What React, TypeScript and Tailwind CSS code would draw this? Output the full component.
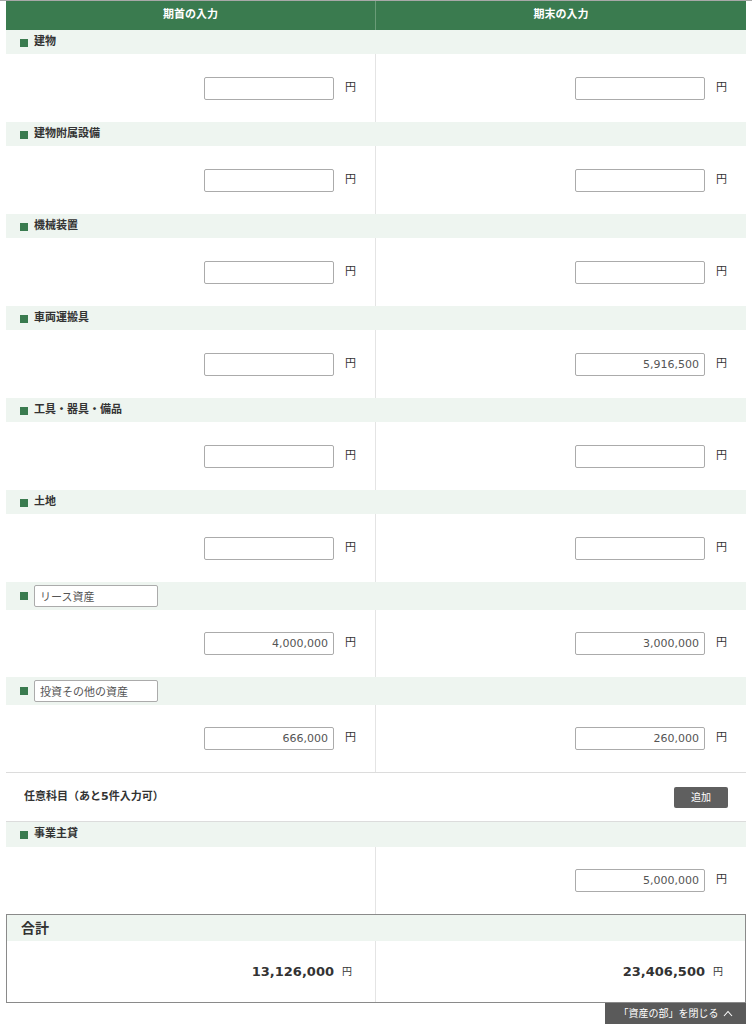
import React from "react";

const FONT = { fontFamily: '"DejaVu Sans", "Noto Sans CJK JP", sans-serif' };

type Item = { name: string; a: string; b: string; editable?: boolean };

const items: Item[] = [
  { name: "建物", a: "", b: "" },
  { name: "建物附属設備", a: "", b: "" },
  { name: "機械装置", a: "", b: "" },
  { name: "車両運搬具", a: "", b: "5,916,500" },
  { name: "工具・器具・備品", a: "", b: "" },
  { name: "土地", a: "", b: "" },
  { name: "リース資産", a: "4,000,000", b: "3,000,000", editable: true },
  { name: "投資その他の資産", a: "666,000", b: "260,000", editable: true },
];

function Square() {
  return <span className="inline-block w-[8px] h-[8px] bg-[#3a7b4f] mr-[6px] shrink-0" />;
}

function AmountCell({ value, border }: { value: string; border?: boolean }) {
  return (
    <div className={`flex items-center justify-end pr-[19px] ${border ? "border-r border-[#e4e4e4]" : ""}`}>
      <input
        readOnly
        value={value}
        className="w-[130px] h-[23px] border border-[#ababab] rounded-[2px] bg-white text-right pr-[5px] text-[11px] text-[#555] outline-none"
        style={FONT}
      />
      <span className="ml-[11px] text-[11px] text-[#333]">円</span>
    </div>
  );
}

function Row({ item }: { item: Item }) {
  return (
    <div>
      {item.editable ? (
        <div className="h-[28px] bg-[#eef5f0] flex items-center pl-[14px]">
          <Square />
          <input
            readOnly
            value={item.name}
            className="w-[124px] h-[22px] border border-[#ababab] rounded-[2px] bg-white pl-[5px] text-[11px] text-[#555] outline-none"
            style={FONT}
          />
        </div>
      ) : (
        <div className="h-[24px] bg-[#eef5f0] flex items-center pl-[14px] pt-px">
          <Square />
          <span className="text-[11px] font-bold text-[#333]">{item.name}</span>
        </div>
      )}
      <div className={`grid grid-cols-2 ${item.editable ? "h-[67px]" : "h-[68px]"}`}>
        <AmountCell value={item.a} border />
        <AmountCell value={item.b} />
      </div>
    </div>
  );
}

export default function App() {
  return (
    <div className="w-[752px] h-[1024px] bg-white overflow-hidden" style={FONT}>
      <div className="h-px bg-[#a8a8a8]" />
      <div className="mx-[6px]">
        <div className="grid grid-cols-2 h-[29px] bg-[#3a7b4f] text-white text-[11px] font-bold">
          <div className="flex items-center justify-center border-r border-[#6a9c78]">期首の入力</div>
          <div className="flex items-center justify-center">期末の入力</div>
        </div>
        {items.map((it) => (
          <Row key={it.name} item={it} />
        ))}
        <div className="border-t border-b border-[#dcdcdc] h-[50px] flex items-center justify-between pl-[18px] pr-[18px]">
          <span className="text-[11px] font-bold text-[#333]">任意科目（あと5件入力可）</span>
          <button className="w-[54px] h-[21px] bg-[#5f5f5f] text-white text-[10px] rounded-[2px]">追加</button>
        </div>
        <div>
          <div className="h-[25px] bg-[#eef5f0] flex items-center pl-[14px]">
            <Square />
            <span className="text-[11px] font-bold text-[#333]">事業主貸</span>
          </div>
          <div className="grid grid-cols-2 h-[67px]">
            <div className="border-r border-[#e4e4e4]" />
            <AmountCell value="5,000,000" />
          </div>
        </div>
        <div className="border border-[#8a8a8a]">
          <div className="h-[26px] bg-[#eef5f0] flex items-center pl-[14px]">
            <span className="text-[14px] font-bold text-[#333]">合計</span>
          </div>
          <div className="grid grid-cols-2 h-[61px]">
            <div className="flex items-center justify-end pr-[23px] border-r border-[#e4e4e4]">
              <span className="text-[13px] font-bold text-[#333]">13,126,000</span>
              <span className="ml-[8px] text-[10px] text-[#333]">円</span>
            </div>
            <div className="flex items-center justify-end pr-[22px]">
              <span className="text-[13px] font-bold text-[#333]">23,406,500</span>
              <span className="ml-[8px] text-[10px] text-[#333]">円</span>
            </div>
          </div>
        </div>
        <div className="flex justify-end">
          <button className="w-[141px] h-[21px] bg-[#5a5a5a] text-white text-[10px] flex items-center justify-center gap-[4px]">
            <span>「資産の部」を閉じる</span>
            <svg width="10" height="7" viewBox="0 0 10 7" fill="none" stroke="white" strokeWidth="1.1">
              <path d="M1 6 L5 1.5 L9 6" />
            </svg>
          </button>
        </div>
      </div>
    </div>
  );
}
